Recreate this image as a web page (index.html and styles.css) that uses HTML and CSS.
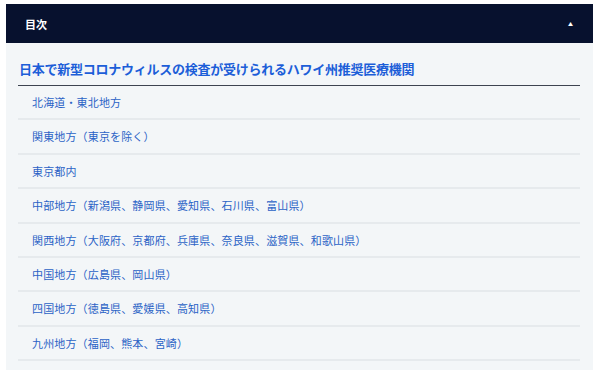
FILE: index.html
```html
<!DOCTYPE html>
<html lang="ja">
<head>
    <meta charset="UTF-8">
    <meta name="viewport" content="width=device-width, initial-scale=1.0">
    <title>目次</title>
    <link rel="stylesheet" href="styles.css">
</head>
<body>
    <div class="toc">
        <div class="toc-header">
            <span class="toc-label">目次</span>
            <span class="toc-toggle">▲</span>
        </div>

        <div class="toc-body">
            <div class="toc-title">日本で新型コロナウィルスの検査が受けられるハワイ州推奨医療機関</div>
            <ul class="toc-list">
                <li class="toc-item"><a href="#">北海道・東北地方</a></li>
                <li class="toc-item"><a href="#">関東地方（東京を除く）</a></li>
                <li class="toc-item"><a href="#">東京都内</a></li>
                <li class="toc-item"><a href="#">中部地方（新潟県、静岡県、愛知県、石川県、富山県）</a></li>
                <li class="toc-item"><a href="#">関西地方（大阪府、京都府、兵庫県、奈良県、滋賀県、和歌山県）</a></li>
                <li class="toc-item"><a href="#">中国地方（広島県、岡山県）</a></li>
                <li class="toc-item"><a href="#">四国地方（徳島県、愛媛県、高知県）</a></li>
                <li class="toc-item"><a href="#">九州地方（福岡、熊本、宮崎）</a></li>
            </ul>
        </div>
    </div>
</body>
</html>
```

FILE: styles.css
```css
body {
    margin: 0;
    background: #ffffff;
    font-family: "Noto Sans CJK JP", "Noto Sans", sans-serif;
}

.toc {
    margin: 4px 7px 6px 6px;
}

.toc-header {
    display: flex;
    align-items: center;
    justify-content: space-between;
    height: 39px;
    padding: 0 20px 0 19px;
    background: #07112e;
    color: #ffffff;
}

.toc-label {
    font-size: 11px;
    font-weight: bold;
}

.toc-toggle {
    font-size: 5px;
    line-height: 1;
}

.toc-body {
    background: #f3f6f8;
    padding: 0 13px 9px 12px;
}

.toc-title {
    padding: 17px 0 8px 1px;
    font-size: 13px;
    line-height: 17px;
    font-weight: bold;
    letter-spacing: -0.25px;
    color: #1c5ed8;
    border-bottom: 1.5px solid #3d4450;
}

.toc-list {
    list-style: none;
    margin: 0;
    padding: 0;
}

.toc-item {
    padding-left: 14px;
    line-height: 32.4px;
    font-size: 11px;
    letter-spacing: 0.15px;
    border-bottom: 2px solid #e6eaed;
}

.toc-item a {
    color: #2b63c6;
    text-decoration: none;
}
```
